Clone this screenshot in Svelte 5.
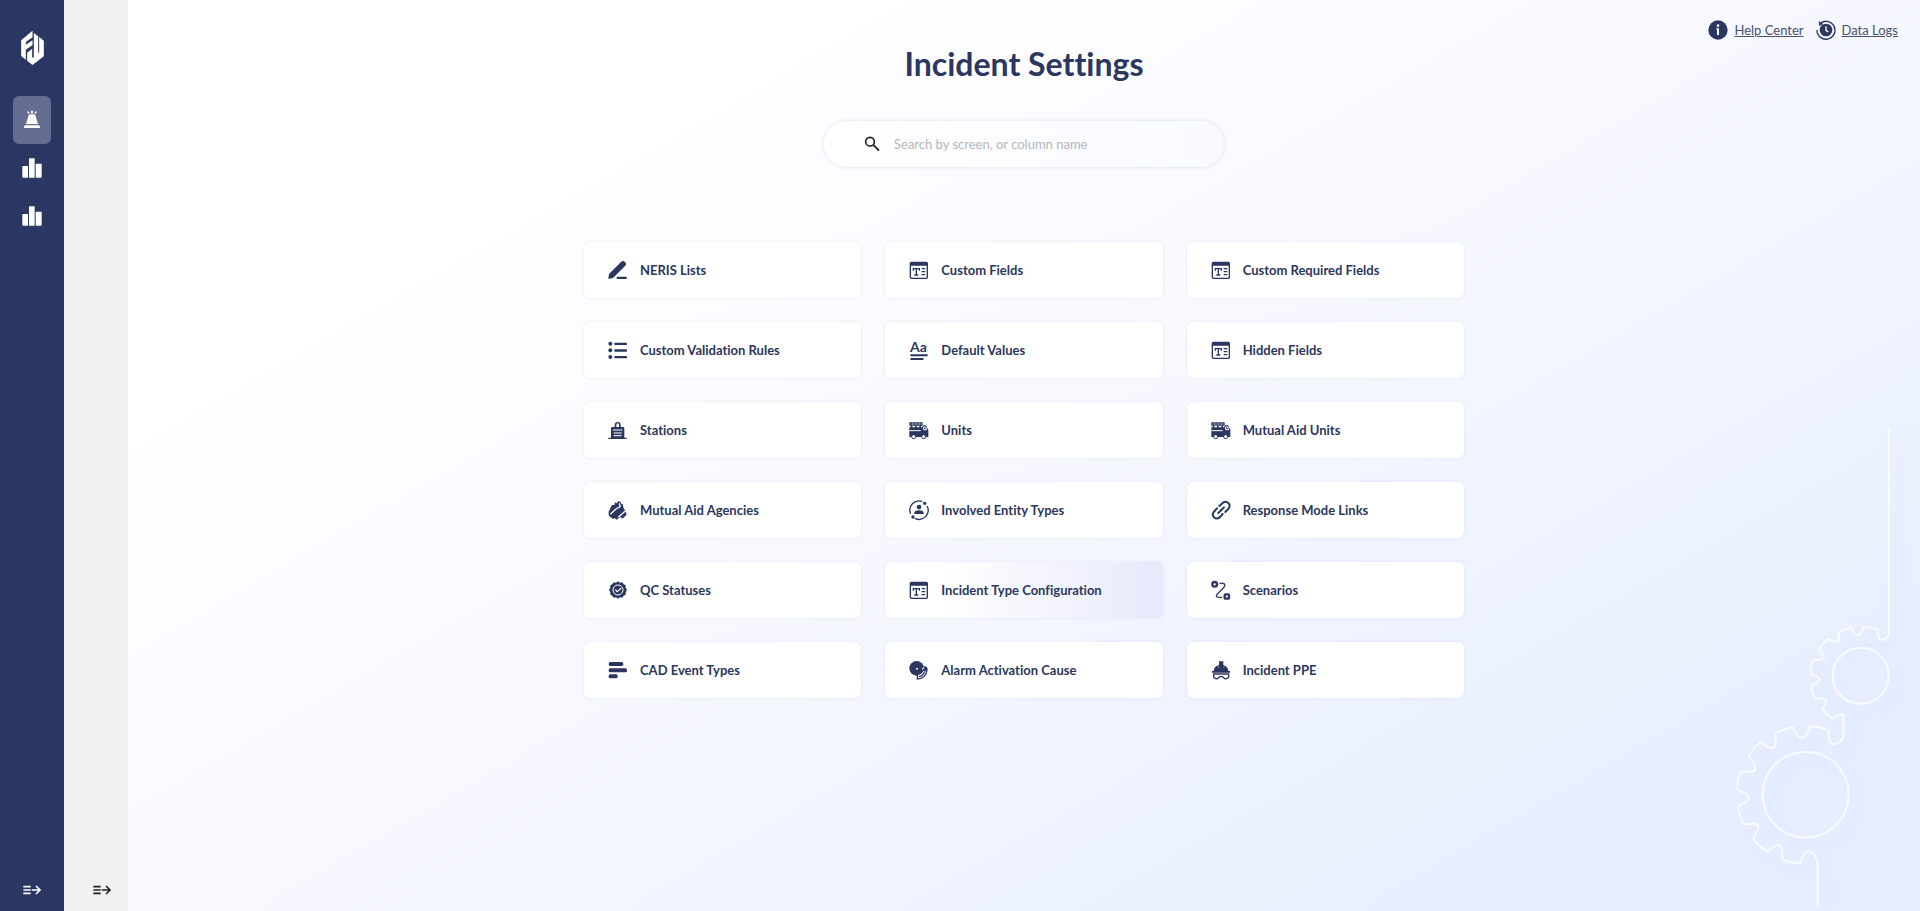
<script>
  let search = $state('');
  let current = $state('Incident Type Configuration');

  const items = [
    { label: 'NERIS Lists', icon: 'pencil' },
    { label: 'Custom Fields', icon: 'fields' },
    { label: 'Custom Required Fields', icon: 'fields' },
    { label: 'Custom Validation Rules', icon: 'list' },
    { label: 'Default Values', icon: 'type' },
    { label: 'Hidden Fields', icon: 'fields' },
    { label: 'Stations', icon: 'station' },
    { label: 'Units', icon: 'truck' },
    { label: 'Mutual Aid Units', icon: 'truck' },
    { label: 'Mutual Aid Agencies', icon: 'hands' },
    { label: 'Involved Entity Types', icon: 'entity' },
    { label: 'Response Mode Links', icon: 'link' },
    { label: 'QC Statuses', icon: 'badge' },
    { label: 'Incident Type Configuration', icon: 'fields' },
    { label: 'Scenarios', icon: 'route' },
    { label: 'CAD Event Types', icon: 'bars' },
    { label: 'Alarm Activation Cause', icon: 'alarm' },
    { label: 'Incident PPE', icon: 'helmet' },
  ];

  let visible = $derived(items.filter((i) => i.label.toLowerCase().includes(search.trim().toLowerCase())));
</script>

{#snippet expandIcon()}
  <svg class="ico" viewBox="0 0 60 60" aria-hidden="true" fill="none" stroke="currentColor" stroke-width="5">
    <path d="M4 20h22M4 30h22M4 40h22M29 30h24M42 18l12 12-12 12" />
  </svg>
{/snippet}

{#snippet chartIcon()}
  <svg class="ico" viewBox="0 0 60 60" aria-hidden="true" fill="currentColor">
    <rect x="1" y="24" width="17" height="35" rx="1" />
    <rect x="21" y="1" width="17" height="58" rx="1" />
    <rect x="41" y="17" width="18" height="42" rx="1" />
  </svg>
{/snippet}

{#snippet icon(name)}
  <svg class="ico" viewBox="0 0 60 60" aria-hidden="true" fill="currentColor">
    {#if name === 'pencil'}
      <path d="M1 57l2-15L39 6q6-6 12 0 6 6 0 12L15 54z" />
      <rect x="26" y="50" width="30" height="7" rx="1" />
    {:else if name === 'fields'}
      <path fill-rule="evenodd" d="M7 5h45q5 0 5 5v42q0 5-5 5H7q-5 0-5-5V10q0-5 5-5zm-1 12v34q0 2 2 2h43q2 0 2-2V17z" />
      <path d="M11 24h22v8h-4v-4h-5v15h4v4H16v-4h4V28h-5v4h-4zM38 24h11v4H38zM38 33h11v4H38zM38 42h11v4H38z" />
    {:else if name === 'list'}
      <circle cx="7" cy="11" r="6" /><circle cx="7" cy="31" r="6" /><circle cx="7" cy="51" r="6" />
      <rect x="19" y="8" width="38" height="7" rx="2" />
      <rect x="19" y="28" width="38" height="7" rx="2" />
      <rect x="19" y="48" width="38" height="7" rx="2" />
    {:else if name === 'type'}
      <text class="aa" x="3" y="37">Aa</text>
      <rect x="4" y="43" width="52" height="6" rx="2" />
      <rect x="4" y="54" width="40" height="6" rx="2" />
    {:else if name === 'station'}
      <path d="M20 21V15q0-9 9-9t9 9v6h7q4 0 4 4v28h7v4H1v-4h8V25q0-4 4-4zm5 0h8v-5q0-6-4-6t-4 6z" fill-rule="evenodd" />
      <path class="cut" d="M15 30h28M17 39h24M17 47h24" stroke-width="3" />
    {:else if name === 'truck'}
      <path d="M1 7h40v10H1zM5 17h5v6H5zM18 17h5v6h-5zM31 17h5v6h-5zM1 22h38l4-6h8l7 14v21H1z" />
      <path class="cut" d="M5 12h34M11 7v10M21 7v10M31 7v10" stroke-width="1" />
      <path class="cut" d="M1 32h34M44 21h6l3 8h-9z" stroke-width="3" />
      <circle class="wheel" cx="14" cy="50" r="6" /><circle class="wheel" cx="44" cy="50" r="6" />
    {:else if name === 'hands'}
      <path d="M2 35L12 15l7 0 2-8 5 3 5-7 6 3 3 6 4 0 2 10 8 16 2 6-13 12-5-5-13 8-6-5-4 3-7-5-6-6z" />
      <path class="cut" d="M7 43l17-16q6-5 8-4l5-5-4-8M31 52l20-18" stroke-width="4" />
    {:else if name === 'entity'}
      <g fill="none" stroke="currentColor" stroke-width="4">
        <path d="M40 5A27 27 0 0 0 5 41M18 55A27 27 0 0 0 54 18" />
      </g>
      <circle cx="47" cy="10" r="5" /><circle cx="12" cy="51" r="5" />
      <circle cx="30" cy="21" r="7" /><path d="M16 42v-4q2-7 14-7t14 7v4z" />
    {:else if name === 'link'}
      <g class="line" stroke-width="6">
        <path d="M25 18L36 8q8-6 16 1 7 8 1 16L43 36" />
        <path d="M35 42L25 53q-8 6-16-1-7-8-1-16L18 25" />
        <path d="M22 39l17-17" />
      </g>
    {:else if name === 'badge'}
      <path d="M30 4l6 4 7-1 4 6 6 3v7l4 7-4 7v7l-6 3-4 6-7-1-6 4-6-4-7 1-4-6-6-3v-7l-4-7 4-7v-7l6-3 4-6 7 1z" />
      <circle class="cut" cx="30" cy="30" r="15" stroke-width="3" />
      <path class="cut" d="M22 29l6 6 11-10" stroke-width="4" />
    {:else if name === 'route'}
      <g class="line">
        <circle cx="11" cy="13" r="7" stroke-width="7" />
        <rect x="41" y="43" width="13" height="13" rx="3" stroke-width="7" />
        <path d="M27 10h10q8 3 2 12L18 43q-5 9 4 9h10" stroke-width="4" />
      </g>
    {:else if name === 'bars'}
      <rect x="2" y="6" width="44" height="12" rx="5" />
      <rect x="2" y="25" width="55" height="12" rx="5" />
      <rect x="2" y="43" width="27" height="12" rx="5" />
    {:else if name === 'alarm'}
      <circle cx="23" cy="25" r="22" />
      <circle cx="24" cy="26" r="3" fill="#fff" />
      <path d="M39 23q3-5 9-4 8 1 8 9-1 6-8 7l-5-3z" />
      <path class="cut" d="M46 22q-6 0-5 7M44 34q-5 11-17 13" stroke-width="3" />
      <path d="M54 30q-3 25-29 27V44M46 35q-4 12-17 15" fill="none" stroke="currentColor" stroke-width="4" />
    {:else}
      <path d="M24 15V4h13v11q14 4 15 18h5v5H3v-5h5q1-14 16-18z" />
      <path class="cut" d="M20 15l3 9M41 15l-3 9" stroke-width="1" />
      <path d="M8 42h45v10q-4 5-12 4l-6-6h-9l-6 6q-8 1-12-4z" fill="none" stroke="currentColor" stroke-width="4" />
    {/if}
  </svg>
{/snippet}

<div class="app">
  <nav class="sidebar" aria-label="Main">
    <a class="logo" href="#home" aria-label="Home">
      <svg viewBox="60 90 74 108" aria-hidden="true" fill="currentColor">
        <path d="M97 92L63 121v47l14 11v-30l20-14v-14L77 134v-8l20-14z" />
        <path d="M101 99l13 10v50l3-3v-45l14 11v47l-34 26-16-13v-24l15-12v25q3 4 5 0z" />
      </svg>
    </a>
    <button class="nav-btn on" aria-label="Incidents">
      <svg class="ico" viewBox="0 0 60 60" aria-hidden="true" fill="currentColor">
        <path d="M15 5l5-1 3 6-4 1zM27 2h6v8h-6zM45 5l-5-1-3 6 4 1zM20 16q1-3 4-3h12q3 0 4 3l8 26H12zM6 52q0-6 4-6h40q4 0 4 6v2H6z" />
      </svg>
    </button>
    <button class="nav-btn" aria-label="Reports">{@render chartIcon()}</button>
    <button class="nav-btn" aria-label="Analytics">{@render chartIcon()}</button>
    <button class="expand" aria-label="Expand menu">{@render expandIcon()}</button>
  </nav>

  <aside class="subnav">
    <button class="expand" aria-label="Expand submenu">{@render expandIcon()}</button>
  </aside>

  <main>
    <svg class="gears" viewBox="0 0 660 1533" aria-hidden="true">
      <path d="M567 80V705C560 715 550 722 540 718C532 710 536 695 532 688Q510 681 490 680C486 695 480 706 474 706C464 706 458 695 455 682Q435 686 417 697C416 710 420 725 410 726C400 726 392 718 385 717Q368 730 359 746C364 755 375 765 371 773C366 781 350 780 340 780Q331 798 331 820C340 826 357 830 358 838C357 848 342 853 334 858Q336 878 345 896C355 897 372 890 378 900C382 912 370 920 367 928Q380 945 398 955C408 950 418 940 430 943V1012C430 1020 410 1034 400 1033C385 1030 385 1005 386 991Q360 980 331 978C326 995 318 1014 306 1014C292 1012 284 995 279 981Q250 987 227 1000C226 1020 232 1042 218 1045C202 1044 192 1032 182 1026Q160 1042 147 1067C155 1080 170 1095 164 1112C150 1118 130 1112 122 1115Q110 1140 112 1169C125 1176 147 1182 147 1193C147 1207 122 1212 114 1220Q118 1248 131 1274C148 1273 168 1266 175 1278C177 1295 162 1305 160 1316Q178 1340 203 1355C213 1345 228 1330 240 1336C252 1345 244 1365 247 1378Q272 1390 301 1389C306 1375 312 1355 326 1354C340 1356 352 1375 353 1392V1522" />
      <circle cx="482" cy="827" r="84" />
      <circle cx="317" cy="1184" r="129" />
    </svg>

    <div class="links">
      <a href="#help">
        <svg class="ico" viewBox="0 0 60 60" aria-hidden="true">
          <circle cx="30" cy="30" r="29" fill="currentColor" />
          <circle cx="30" cy="17" r="4" fill="#fff" />
          <path d="M25 25h8v20h-6V29h-2z" fill="#fff" />
        </svg>
        <span>Help Center</span>
      </a>
      <a href="#logs">
        <svg class="ico" viewBox="0 0 60 60" aria-hidden="true">
          <circle cx="30" cy="30" r="19" fill="currentColor" />
          <path d="M14 9A27 27 0 1 1 3 30" fill="none" stroke="currentColor" stroke-width="4" />
          <path d="M8 3l2 15 12-6z" fill="currentColor" />
          <path d="M30 19v12l7 5" fill="none" stroke="#fff" stroke-width="4" />
        </svg>
        <span>Data Logs</span>
      </a>
    </div>

    <h1>Incident Settings</h1>

    <label class="search">
      <svg class="ico" viewBox="0 0 60 60" aria-hidden="true" fill="none" stroke="currentColor" stroke-width="5">
        <circle cx="24" cy="23" r="13" /><path d="M33 32l18 18" stroke-width="6" />
      </svg>
      <input type="text" bind:value={search} placeholder="Search by screen, or column name" aria-label="Search" />
    </label>

    <div class="grid">
      {#each visible as item}
        <a class="card" class:active={item.label === current} href="#settings" onmouseenter={() => (current = item.label)}>
          {@render icon(item.icon)}
          <span>{item.label}</span>
        </a>
      {/each}
    </div>
  </main>
</div>

<style>
  :global(body) { margin: 0; }
  .app {
    display: flex;
    min-height: 100vh;
    font-family: Lato, "Liberation Sans", sans-serif;
    font-size: 13px;
    font-variant-ligatures: none;
    line-height: 20px;
    color: #2b3760;
  }
  button { padding: 0; border: 0; background: none; color: inherit; cursor: pointer; }
  .ico { display: block; flex: none; width: 20px; height: 20px; overflow: visible; }

  .sidebar {
    box-sizing: border-box;
    display: flex;
    flex-direction: column;
    align-items: center;
    width: 64px;
    padding: 30px 0 11px;
    background: #2b3763;
    color: #fff;
  }
  .logo { color: inherit; margin-bottom: 30px; }
  .logo svg { display: block; width: 25px; height: 36px; }
  .nav-btn { display: flex; align-items: center; justify-content: center; width: 38px; height: 48px; border-radius: 6px; }
  .nav-btn.on { background: #656e91; }
  .expand { margin-top: auto; }

  .subnav {
    box-sizing: border-box;
    display: flex;
    flex-direction: column;
    align-items: flex-end;
    width: 64px;
    padding: 0 16px 11px 0;
    background: #f1f1f1;
    color: #222;
  }

  main {
    position: relative;
    flex: 1;
    display: flex;
    flex-direction: column;
    align-items: center;
    background: linear-gradient(150deg, #fff 20%, #f8f9ff 48%, #e7eeff 88%);
  }
  .gears { position: absolute; right: 0; bottom: 0; width: 220px; height: 511px; pointer-events: none; }
  .gears path, .gears circle {
    fill: none;
    stroke: #fafbff;
    stroke-width: 6;
    stroke-linejoin: round;
    filter: drop-shadow(24px 24px 16px rgba(215, 215, 255, 0.5));
  }

  .links { align-self: stretch; display: flex; justify-content: flex-end; gap: 12px; padding: 20px 22px 4px; }
  .links a { display: flex; align-items: center; gap: 6px; color: inherit; text-decoration: none; }
  .links span { text-decoration: underline; color: #4a5272; }

  h1 { margin: 0; font-size: 32px; line-height: 40px; font-weight: 700; }

  .search {
    box-sizing: border-box;
    display: flex;
    align-items: center;
    gap: 12px;
    width: 400px;
    height: 46px;
    margin: 37px 0 75px;
    padding: 0 38px;
    border-radius: 23px;
    background: linear-gradient(90deg, #fff, #f9faff);
    box-shadow: 0 0 4px rgba(150, 175, 225, 0.4);
    color: #222;
  }
  input { flex: 1; min-width: 0; padding: 0; border: 0; outline: none; background: none; font: inherit; color: inherit; }
  input::placeholder { color: #b4b6bb; opacity: 1; }

  .grid { position: relative; display: grid; grid-template-columns: repeat(3, 1fr); gap: 24px; width: 880px; max-width: 100%; padding-bottom: 40px; }
  .card {
    display: flex;
    align-items: center;
    gap: 12px;
    height: 56px;
    padding: 0 24px;
    border-radius: 6px;
    background: #fff;
    box-shadow: 0 0 3px rgba(170, 180, 230, 0.3);
    color: inherit;
    font-weight: 700;
    text-decoration: none;
  }
  .card.active { background: linear-gradient(90deg, #fff 20%, #e6e9fb); }

  .aa { font-size: 42px; font-weight: 700; }
  .cut { fill: none; stroke: #fff; }
  .wheel { fill: #fff; stroke: currentColor; stroke-width: 3; }
  .line { fill: none; stroke: currentColor; stroke-linecap: round; }
</style>
